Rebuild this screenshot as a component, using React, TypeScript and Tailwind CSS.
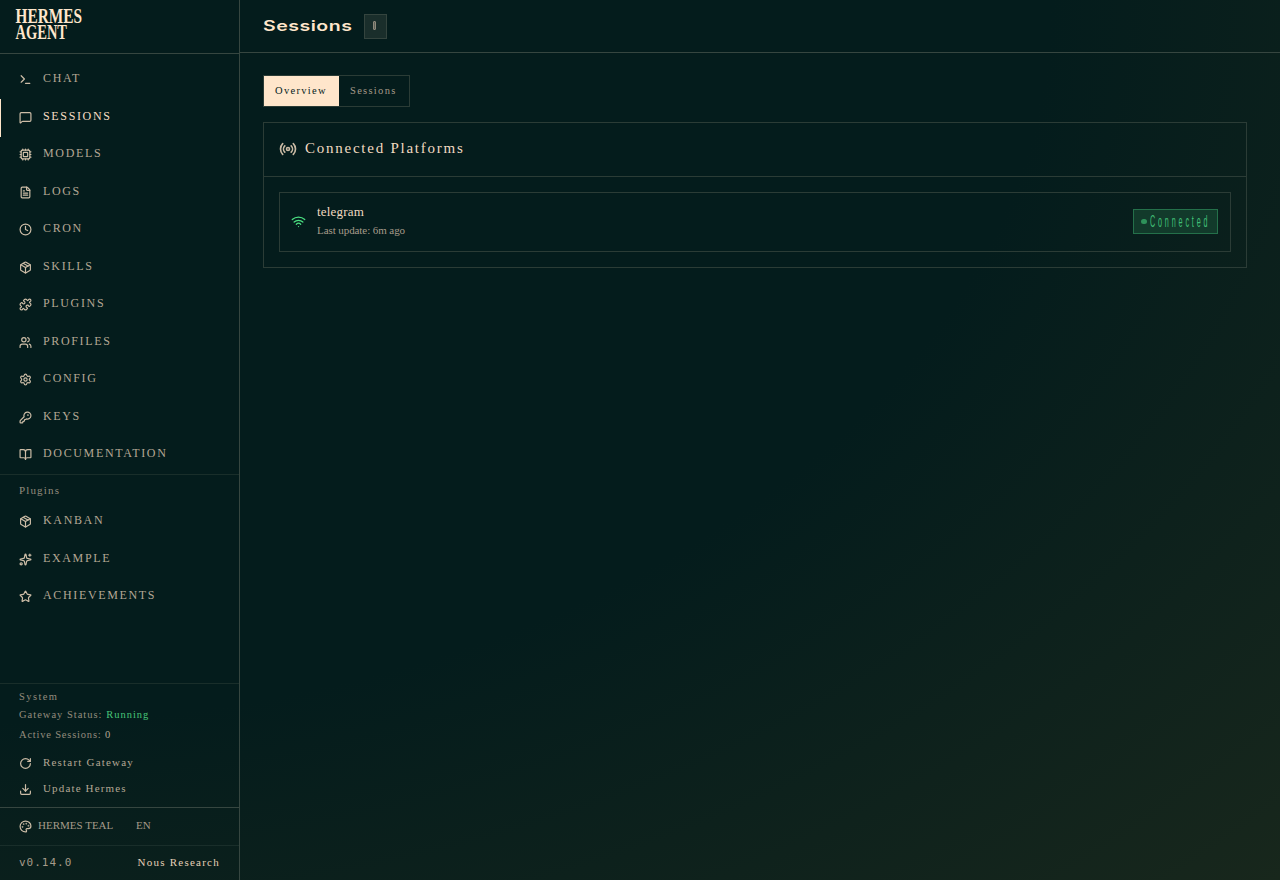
//External Imports
import {
	BookOpen,
	Clock,
	Cpu,
	Download,
	FileText,
	KeyRound,
	type LucideIcon,
	MessageSquare,
	Package,
	Palette,
	Puzzle,
	Radio,
	RotateCw,
	Settings,
	Sparkles,
	Star,
	Terminal,
	Users,
	Wifi,
} from "lucide-react";
import { useState } from "react";

//Types
type NavEntry = { label: string; icon: LucideIcon };

//Setup the Navigation Entries
const mainEntries: NavEntry[] = [
	{ label: "Chat", icon: Terminal },
	{ label: "Sessions", icon: MessageSquare },
	{ label: "Models", icon: Cpu },
	{ label: "Logs", icon: FileText },
	{ label: "Cron", icon: Clock },
	{ label: "Skills", icon: Package },
	{ label: "Plugins", icon: Puzzle },
	{ label: "Profiles", icon: Users },
	{ label: "Config", icon: Settings },
	{ label: "Keys", icon: KeyRound },
	{ label: "Documentation", icon: BookOpen },
];

const pluginEntries: NavEntry[] = [
	{ label: "Kanban", icon: Package },
	{ label: "Example", icon: Sparkles },
	{ label: "Achievements", icon: Star },
];

//Renders the Logo
function Logo() {
	return (
		<svg
			width="100"
			height="46"
			viewBox="0 0 100 46"
			className="overflow-visible fill-[#ffe6cb] font-['Liberation_Serif',serif] font-bold"
		>
			<text x="0.5" y="22.8" fontSize="20.5" textLength="66.5" lengthAdjust="spacingAndGlyphs">
				HERMES
			</text>
			<text x="0.5" y="39" fontSize="20.5" textLength="51.5" lengthAdjust="spacingAndGlyphs">
				AGENT
			</text>
		</svg>
	);
}

//Renders a Sidebar Link
function NavItem({
	entry,
	active,
	onSelect,
}: {
	entry: NavEntry;
	active: boolean;
	onSelect: (label: string) => void;
}) {
	const Icon = entry.icon;

	return (
		<button
			onClick={() => onSelect(entry.label)}
			className={`relative flex h-[37.5px] w-full items-center gap-[11px] pb-1 pl-[19px] text-left hover:text-[#ffe6cb] ${
				active ? "text-[#f6dec4]" : "text-[#b4a794]"
			}`}
		>
			{/*Setup the Active Marker*/}
			{active && <span className="absolute left-0 top-0 h-full w-px bg-[#ffe6cb]" />}
			<Icon size={13} strokeWidth={2.2} className="mt-[3px] shrink-0 text-[#cdbda7]" />
			<span className="text-[12px] uppercase leading-4 tracking-[1.65px]">{entry.label}</span>
		</button>
	);
}

//Renders the Sidebar
function Sidebar() {
	const [selected, setSelected] = useState("Sessions");

	return (
		<aside className="flex h-full w-60 shrink-0 flex-col border-r border-[#364640]">
			{/*Setup the Logo Area*/}
			<div className="flex h-[53.5px] shrink-0 items-start border-b-[1.5px] border-[#364640] pl-[15px]">
				<Logo />
			</div>

			{/*Setup the Main Links*/}
			<nav className="pt-2">
				{mainEntries.map(entry => (
					<NavItem
						key={entry.label}
						entry={entry}
						active={selected === entry.label}
						onSelect={setSelected}
					/>
				))}
			</nav>

			{/*Setup the Plugin Links*/}
			<div className="border-t border-[#192e2a] pt-[7px]">
				<p className="h-[21.25px] pl-[19px] text-[11px] leading-4 tracking-[1.15px] text-[#948c7e]">Plugins</p>
				{pluginEntries.map(entry => (
					<NavItem
						key={entry.label}
						entry={entry}
						active={selected === entry.label}
						onSelect={setSelected}
					/>
				))}
			</div>

			{/*Setup the System Area*/}
			<div className="mt-auto h-[124px] shrink-0 border-t border-[#192e2a] pt-[5px] text-[10.5px] text-[#948c7e]">
				<p className="pl-[19px] leading-4 tracking-[1.4px]">System</p>
				<p className="mt-0.5 pl-[19px] leading-4 tracking-[1px]">
					Gateway Status: <span className="text-[#47c578]">Running</span>
				</p>
				<p className="mt-1 pl-[19px] leading-4 tracking-[0.8px]">
					Active Sessions: <span className="text-[#b4a794]">0</span>
				</p>
				<button className="mt-1.5 flex h-[26px] items-center gap-[11px] pl-[19px] text-[11px] tracking-[1.2px] text-[#b4a794]">
					<RotateCw size={13} strokeWidth={2.2} className="mt-0.5 text-[#cdbda7]" />
					Restart Gateway
				</button>
				<button className="flex h-[26px] items-center gap-[11px] pl-[19px] text-[11px] tracking-[1.15px] text-[#b4a794]">
					<Download size={13} strokeWidth={2.2} className="mt-0.5 text-[#cdbda7]" />
					Update Hermes
				</button>
			</div>

			{/*Setup the Theme and Language Area*/}
			<div className="flex h-[38px] shrink-0 items-center border-t border-[#364640] pb-0.5 pl-[19px] text-[11px] text-[#a69b8a]">
				<Palette size={13} strokeWidth={2.2} className="mr-[6px] mt-0.5 text-[#cdbda7]" />
				<span className="w-[98px]">HERMES TEAL</span>
				<span>EN</span>
			</div>

			{/*Setup the Version Area*/}
			<div className="flex h-[35px] shrink-0 items-center justify-between border-t border-[#192e2a] pl-[19px] pr-[18px]">
				<span className="font-['DejaVu_Sans_Mono',monospace] text-[11px] leading-4 tracking-[1px] text-[#a69b8a]">
					v0.14.0
				</span>
				<span className="pb-0.5 pr-px text-[11px] leading-4 tracking-[1.25px] text-[#e5d0b8]">Nous Research</span>
			</div>
		</aside>
	);
}

//Renders the Connected Platforms Card
function PlatformsCard() {
	return (
		<section className="mt-[15px] border border-[#2b3c36]">
			{/*Setup the Card Header*/}
			<div className="flex h-[54px] items-center gap-2 border-b border-[#2b3c36] pb-0.5 pl-[15px]">
				<Radio size={18} strokeWidth={2.2} className="text-[#c8b9a3]" />
				<h2 className="text-[15px] tracking-[1.75px] text-[#f1dac1]">Connected Platforms</h2>
			</div>

			{/*Setup the Platform Row*/}
			<div className="p-[15px]">
				<div className="flex h-[60px] items-center border border-[#2b3c36] pb-0.5 pl-[11px] pr-3">
					<Wifi size={15} className="text-[#4ade80]" />
					<div className="ml-[11px] flex-1">
						<p className="text-[13px] leading-[18px] tracking-[0.2px] text-[#f1dac1]">telegram</p>
						<p className="text-[11px] leading-[18px] tracking-[-0.08px] text-[#a69b8a]">Last update: 6m ago</p>
					</div>
					<div className="flex h-[25px] w-[85px] items-center border border-[#24704a] bg-[#123a2b] pl-[7px] text-[#40bf76]">
						<span className="h-[5px] w-[6px] rounded-full bg-[#2e925a]" />
						<span className="ml-[3px] w-[60px] origin-left scale-x-[0.45] whitespace-nowrap pt-0.5 font-['Liberation_Sans',sans-serif] text-[16px] leading-5 tracking-[6.3px]">
							Connected
						</span>
					</div>
				</div>
			</div>
		</section>
	);
}

//Setup the Page
export default function App() {
	const [tab, setTab] = useState("Overview");

	return (
		<div className="flex h-screen w-screen overflow-hidden bg-[#041c1c] bg-[radial-gradient(ellipse_at_0%_0%,#041c1c_58%,#18271c_100%)] font-['Liberation_Serif',serif]">
			<Sidebar />

			{/*Setup the Main Area*/}
			<main className="flex flex-1 flex-col">
				{/*Setup the Page Header*/}
				<header className="flex h-[53px] items-center border-b border-[#364640] pl-[23px]">
					<h1 className="w-[101px] origin-left scale-x-[1.35] whitespace-nowrap font-['Inter',sans-serif] text-[14.5px] font-semibold leading-5 tracking-[0.35px] text-[#ffe6cb]">
						Sessions
					</h1>
					<span className="flex h-[25px] w-[23px] items-center justify-center border border-[#34443e] bg-[#1a2e2b]">
						<span className="-mt-px mr-0.5 h-[9px] w-[3px] rounded-[1px] border border-[#8f8a7c] bg-[#5d6158]" />
					</span>
				</header>

				<div className="pl-[23px] pr-[33px] pt-[22px]">
					{/*Setup the Tabs*/}
					<div className="flex h-8 w-[147px] border border-[#2b3c36] text-[10.5px] tracking-[1.3px]">
						{["Overview", "Sessions"].map(name => (
							<button
								key={name}
								onClick={() => setTab(name)}
								className={`px-[11px] text-left ${
									tab === name ? "w-[75px] bg-[#ffe6cb] text-[#041c1c]" : "flex-1 text-[#a69b8a]"
								}`}
							>
								{name}
							</button>
						))}
					</div>

					<PlatformsCard />
				</div>
			</main>
		</div>
	);
}
